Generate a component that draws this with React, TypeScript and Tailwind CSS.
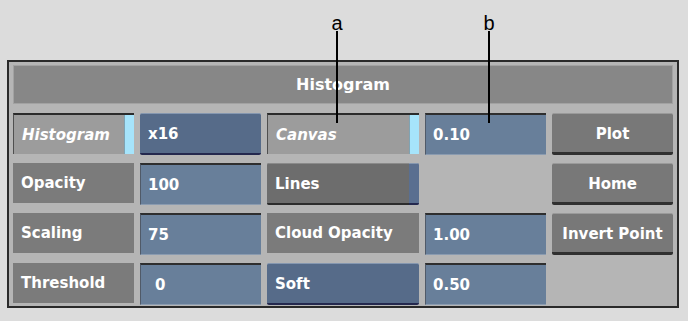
import type { ReactNode } from 'react';

const font = { fontFamily: '"DejaVu Sans", "Liberation Sans", sans-serif' };

// Flat grey label
function Label({ children }: { children: ReactNode }) {
  return (
    <div className="h-[40px] bg-[#7b7b7b] text-white flex items-center pl-2 text-[15px] font-bold">
      {children}
    </div>
  );
}

// Inset grey toggle with cyan light on the right
function Toggle({ children }: { children: ReactNode }) {
  return (
    <div className="h-[41px] bg-[#9c9c9c] border-t-2 border-t-[#2b2b2b] border-l border-l-[#4f4f4f] flex">
      <div className="flex-1 flex items-center pl-2 pt-[1px] text-white italic font-bold text-[15px]">{children}</div>
      <div className="w-[10px] bg-[#a6e4fb] border-l border-l-[#7fa3b3]" />
    </div>
  );
}

// Blue numeric field
function Field({ children, indent }: { children: ReactNode; indent?: boolean }) {
  return (
    <div
      className={`h-[42px] bg-[#687f9a] border-t-2 border-t-[#2e2e2e] border-l border-l-[#505a68] border-b border-b-[#8a9bb0] flex items-center pt-[1px] text-white font-bold text-[15px] ${
        indent ? 'pl-[14px]' : 'pl-[7px]'
      }`}
    >
      {children}
    </div>
  );
}

// Raised blue button
function BlueButton({ children }: { children: ReactNode }) {
  return (
    <div className="h-[42px] bg-[#566b89] border-t border-t-[#8597b0] border-b-2 border-b-[#24284e] rounded-[2px] flex items-center pl-2 pt-[2px] text-white font-bold text-[15px]">
      {children}
    </div>
  );
}

// Raised grey button
function GreyButton({ children }: { children: ReactNode }) {
  return (
    <div className="h-[42px] bg-[#787878] border-t border-t-[#9a9a9a] border-b-[3px] border-b-[#303030] rounded-[2px] flex items-center justify-center pt-[2px] text-white font-bold text-[15px]">
      {children}
    </div>
  );
}

// Raised dark grey with blue end
function SplitButton({ children }: { children: ReactNode }) {
  return (
    <div className="h-[42px] flex rounded-[2px] overflow-hidden">
      <div className="flex-1 bg-[#6d6d6d] border-t border-t-[#8a8a8a] border-b-2 border-b-[#2c2c2c] flex items-center pl-2 pt-[2px] text-white font-bold text-[15px]">
        {children}
      </div>
      <div className="w-[10px] bg-[#5a6f90] border-t border-t-[#8597b0] border-b-2 border-b-[#24284e]" />
    </div>
  );
}

export default function App() {
  return (
    <div className="relative w-[688px] h-[321px] bg-[#dcdcdc] overflow-hidden" style={font}>
      {/* callouts */}
      <div className="absolute left-[330px] top-[8px] w-[14px] text-center text-[20px] text-black" style={{ fontFamily: '"Liberation Sans", sans-serif' }}>
        a
      </div>
      <div className="absolute left-[336px] top-[31px] w-[2px] h-[92px] bg-black z-10" />
      <div className="absolute left-[482px] top-[8px] w-[14px] text-center text-[20px] text-black" style={{ fontFamily: '"Liberation Sans", sans-serif' }}>
        b
      </div>
      <div className="absolute left-[488px] top-[31px] w-[2px] h-[92px] bg-black z-10" />

      <div className="ml-[7px] mt-[60px] w-[672px] h-[248px] border-2 border-[#2a2a2a] bg-[#b5b5b5] px-[4px] pt-[3px]">
        <div className="h-[39px] bg-[#878787] border border-[#a2a2a2] flex items-center justify-center pt-[1px] text-white font-bold text-[16px]">
          Histogram
        </div>
        <div className="mt-[9px] grid grid-cols-[121px_121px_152px_121px_121px] gap-x-[6px] gap-y-[8px] auto-rows-[42px] items-start">
          <Toggle>Histogram</Toggle>
          <BlueButton>x16</BlueButton>
          <Toggle>Canvas</Toggle>
          <Field>0.10</Field>
          <GreyButton>Plot</GreyButton>

          <Label>Opacity</Label>
          <Field>100</Field>
          <SplitButton>Lines</SplitButton>
          <div />
          <GreyButton>Home</GreyButton>

          <Label>Scaling</Label>
          <Field>75</Field>
          <Label>Cloud Opacity</Label>
          <Field>1.00</Field>
          <GreyButton>Invert Point</GreyButton>

          <Label>Threshold</Label>
          <Field indent>0</Field>
          <BlueButton>Soft</BlueButton>
          <Field>0.50</Field>
          <div />
        </div>
      </div>
    </div>
  );
}
